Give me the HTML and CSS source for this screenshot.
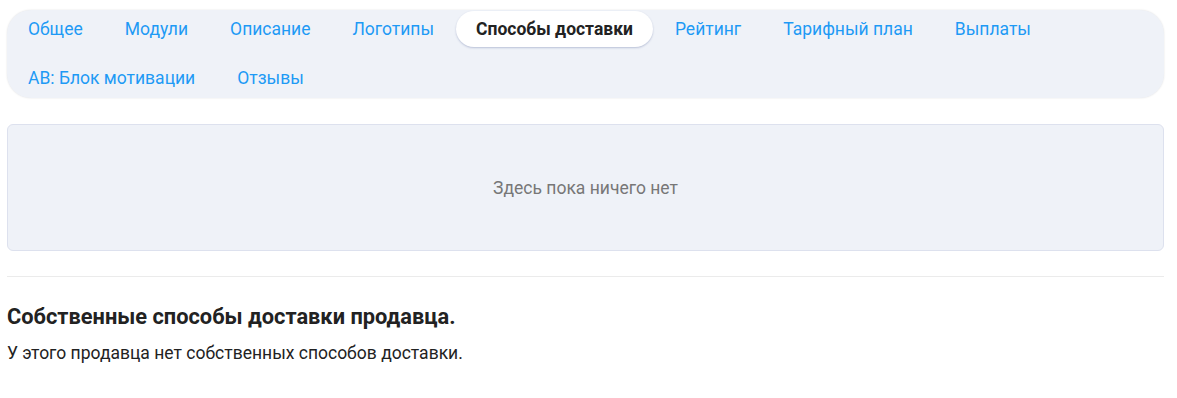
FILE: index.html
```html
<!DOCTYPE html>
<html lang="ru">
<head>
    <meta charset="UTF-8">
    <meta name="viewport" content="width=device-width, initial-scale=1.0">
    <title>Способы доставки</title>
    <link rel="stylesheet" href="styles.css">
</head>
<body>

    <div class="page">
        <!-- Tabs -->
        <nav class="tabs">
            <a class="tab" href="#">Общее</a>
            <a class="tab" href="#">Модули</a>
            <a class="tab" href="#">Описание</a>
            <a class="tab" href="#">Логотипы</a>
            <a class="tab tab-active" href="#">Способы доставки</a>
            <a class="tab" href="#">Рейтинг</a>
            <a class="tab" href="#">Тарифный план</a>
            <a class="tab" href="#">Выплаты</a>
            <a class="tab" href="#">АВ: Блок мотивации</a>
            <a class="tab" href="#">Отзывы</a>
        </nav>

        <div class="empty-box">Здесь пока ничего нет</div>

        <hr class="divider">

        <h3 class="section-title">Собственные способы доставки продавца.</h3>
        <p class="section-text">У этого продавца нет собственных способов доставки.</p>
    </div>

</body>
</html>
```

FILE: styles.css
```css
/* Basic Reset */
* {
    margin: 0;
    padding: 0;
    box-sizing: border-box;
}

body {
    font-family: Roboto, 'Liberation Sans', sans-serif;
    background: #fff;
    color: #222;
}

.page {
    padding: 10px 13px 0 7px;
}

/* Tabs */
.tabs {
    display: flex;
    flex-wrap: wrap;
    column-gap: 2px;
    row-gap: 13px;
    padding: 1px 1px 2px 1px;
    background: #eff2f8;
    border-radius: 24px;
    box-shadow: 0 0 2px rgba(0, 0, 0, 0.12);
}

.tab {
    display: block;
    height: 36px;
    line-height: 36px;
    padding: 0 20px;
    font-size: 17.5px;
    color: #1e9af5;
    text-decoration: none;
    border-radius: 18px;
}

.tab-active {
    background: #fff;
    color: #222;
    font-weight: bold;
    box-shadow: 0 1px 2px rgba(60, 80, 140, 0.3);
}

/* Empty state */
.empty-box {
    margin-top: 26px;
    height: 127px;
    display: flex;
    align-items: center;
    justify-content: center;
    background: #eff2f8;
    border: 1px solid #dde1ee;
    border-radius: 6px;
    font-size: 17.5px;
    color: #777;
}

.divider {
    border: none;
    border-top: 1px solid #ebebeb;
    margin-top: 25px;
}

.section-title {
    margin-top: 26px;
    font-size: 21.8px;
    line-height: 28px;
    font-weight: bold;
    color: #222;
}

.section-text {
    margin-top: 10px;
    font-size: 17.5px;
    line-height: 24px;
    color: #222;
}
```
